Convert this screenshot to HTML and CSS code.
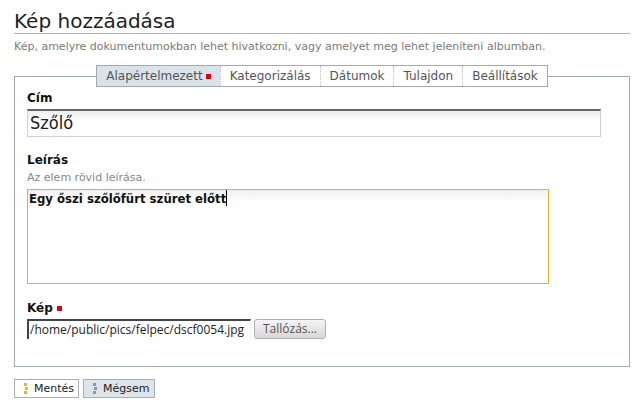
FILE: index.html
```html
<!DOCTYPE html>
<html lang="hu">
<head>
<meta charset="utf-8">
<title>Kép hozzáadása</title>
<link rel="stylesheet" href="styles.css">
</head>
<body>
<div class="page">
  <h1 class="title">Kép hozzáadása</h1>
  <p class="subtitle">Kép, amelyre dokumentumokban lehet hivatkozni, vagy amelyet meg lehet jeleníteni albumban.</p>
  <form class="form">
    <fieldset class="box">
      <legend class="tabs">
        <span class="tab tab-active">Alapértelmezett<span class="req"></span></span>
        <span class="tab">Kategorizálás</span>
        <span class="tab">Dátumok</span>
        <span class="tab">Tulajdon</span>
        <span class="tab">Beállítások</span>
      </legend>
      <div class="field field-title">
        <label class="label">Cím</label>
        <div class="input-title">Szőlő</div>
      </div>
      <div class="field field-desc">
        <label class="label">Leírás</label>
        <div class="help">Az elem rövid leírása.</div>
        <div class="textarea">Egy őszi szőlőfürt szüret előtt<span class="caret"></span></div>
      </div>
      <div class="field field-file">
        <label class="label">Kép<span class="req"></span></label>
        <div class="file-row">
          <div class="file-text">/home/public/pics/felpec/dscf0054.jpg</div>
          <span class="browse">Tallózás...</span>
        </div>
      </div>
    </fieldset>
    <div class="actions">
      <span class="btn btn-save"><span class="dots dots-save"><i></i><i></i><i></i></span>Mentés</span>
      <span class="btn btn-cancel"><span class="dots dots-cancel"><i></i><i></i><i></i></span>Mégsem</span>
    </div>
  </form>
</div>
</body>
</html>
```
FILE: styles.css
```css
* { box-sizing: border-box; }
html, body { margin: 0; padding: 0; background: #fff; }
body { font-family: "DejaVu Sans", Verdana, sans-serif; color: #222; }
.page { width: 616px; margin-left: 14px; }

.title {
  margin: 0;
  padding-top: 9px;
  font-size: 20px;
  line-height: 24px;
  font-weight: normal;
  color: #222;
  border-bottom: 1px solid #a4b6c6;
}
.subtitle {
  margin: 6px 0 0;
  font-size: 11px;
  line-height: 14px;
  color: #7a7a7a;
}
.form { margin-top: 11px; }
.box {
  margin: 0;
  padding: 0 12px 27px 12px;
  border: 1px solid #a0aab4;
  min-inline-size: 0;
}
.tabs {
  margin: 0 auto;
  padding: 0;
  display: flex;
  border: 1px solid #a0aab4;
  height: 22px;
}
.tab {
  display: flex;
  align-items: center;
  padding: 0 9px;
  font-size: 12px;
  color: #555;
  border-left: 1px dotted #b8c0c8;
  background: #fff;
}
.tab:first-child { border-left: none; }
.tab-active { background: #dae3ea; color: #555; }
.req {
  display: inline-block;
  width: 5px;
  height: 5px;
  background: #dd0011;
  margin-left: 3px;
  vertical-align: middle;
}
.label {
  display: block;
  font-size: 12px;
  line-height: 15px;
  font-weight: bold;
  color: #111;
}
.field-title { margin-top: 4px; }
.input-title {
  margin-top: 3px;
  width: 574px;
  height: 28px;
  border: 1px solid #d0d0d0;
  border-top: 2px solid #666;
  background: linear-gradient(#ececec, #fff 10px);
  font-size: 18px;
  line-height: 24px;
  padding-left: 2px;
  font-stretch: condensed;
  color: #222;
}
.field-desc { margin-top: 16px; }
.help {
  margin-top: 3px;
  font-size: 11px;
  line-height: 14px;
  color: #888;
}
.textarea {
  margin-top: 4px;
  width: 522px;
  height: 95px;
  border: 1px solid #e8b020;
  background: linear-gradient(#f0f0f0, #fff 12px);
  font-size: 13px;
  font-weight: bold;
  line-height: 18px;
  padding: 0 1px;
  color: #111;
  font-stretch: condensed;
}
.caret { display: inline-block; width: 1px; height: 16px; background: #000; vertical-align: -3px; }
.field-file { margin-top: 17px; }
.field-file .req { margin-left: 4px; }
.file-row {
  margin-top: 3px;
  display: flex;
  align-items: center;
  gap: 3px;
}
.file-text {
  width: 224px;
  height: 20px;
  border-top: 2px solid #444;
  border-left: 2px solid #444;
  border-right: 1px solid #eee;
  background: #fff;
  font-family: "Open Sans", "DejaVu Sans", sans-serif;
  font-size: 12px;
  line-height: 17px;
  padding-left: 1px;
  color: #222;
  white-space: nowrap;
  overflow: hidden;
}
.browse {
  width: 72px;
  height: 20px;
  border: 1px solid #b0b0b0;
  border-radius: 3px;
  background: linear-gradient(#f4f4f4, #d8d8d8);
  font-family: "Open Sans", "DejaVu Sans", sans-serif;
  font-size: 12px;
  line-height: 18px;
  text-align: center;
  color: #555;
}
.actions {
  margin-top: 12px;
  display: flex;
  gap: 4px;
}
.btn {
  display: flex;
  align-items: center;
  height: 19px;
  border: 1px solid #a6b0ba;
  font-size: 11px;
  color: #222;
  padding: 0 4px 0 9px;
  white-space: nowrap;
}
.btn-save { background: #fff; }
.btn-cancel { background: #dde4ea; }
.dots { display: flex; flex-direction: column; gap: 1px; margin-right: 6px; }
.dots i { display: block; width: 3px; height: 3px; }
.dots-save i { background: #f0b020; }
.dots-save i:nth-child(2) { margin-left: 1px; }
.dots-cancel i { background: #8a9aaa; }
.dots-cancel i:nth-child(2) { margin-left: 1px; }
```
